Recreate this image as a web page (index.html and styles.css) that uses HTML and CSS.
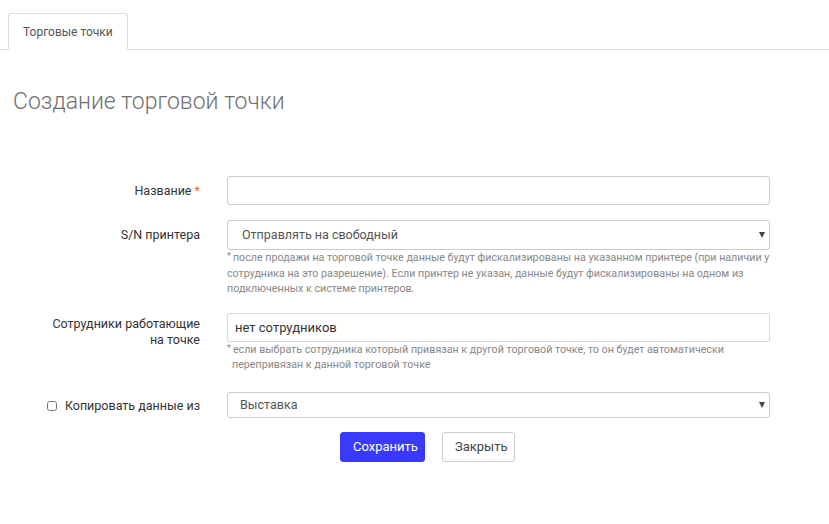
FILE: index.html
```html
<!DOCTYPE html>
<html lang="ru">
<head>
<meta charset="utf-8">
<title>Создание торговой точки</title>
<link rel="stylesheet" href="styles.css">
</head>
<body>
<nav class="tabs">
  <a class="tab active" href="#">Торговые точки</a>
</nav>

<h1 class="page-title">Создание торговой точки</h1>

<form class="form">
  <div class="row">
    <label class="label" for="name">Название <span class="req">*</span></label>
    <div class="field">
      <input class="control" id="name" type="text">
    </div>
  </div>

  <div class="row">
    <label class="label" for="printer">S/N принтера</label>
    <div class="field">
      <div class="select">
        <span>Отправлять на свободный</span>
        <i class="caret"></i>
      </div>
      <p class="help">после продажи на торговой точке данные будут фискализированы на указанном принтере (при наличии у сотрудника на это разрешение). Если принтер не указан, данные будут фискализированы на одном из подключенных к системе принтеров.</p>
    </div>
  </div>

  <div class="row row-wide">
    <label class="label label-multi" for="staff">Сотрудники работающие на точке</label>
    <div class="field">
      <div class="control tags">нет сотрудников</div>
      <p class="help help-indent">если выбрать сотрудника который привязан к другой торговой точке, то он будет автоматически перепривязан к данной торговой точке</p>
    </div>
  </div>

  <div class="row row-copy">
    <label class="label label-check"><input class="check" type="checkbox"> Копировать данные из</label>
    <div class="field">
      <div class="select select-copy">
        <span>Выставка</span>
        <i class="caret"></i>
      </div>
    </div>
  </div>

  <div class="actions">
    <button class="btn btn-primary" type="button">Сохранить</button>
    <button class="btn btn-default" type="button">Закрыть</button>
  </div>
</form>
</body>
</html>
```

FILE: styles.css
```css
* {
  box-sizing: border-box;
}

body {
  margin: 0;
  background: #fff;
  font-family: Roboto, "Noto Sans", Arial, sans-serif;
  color: #333;
  font-size: 13px;
}

/* tab strip */
.tabs {
  display: flex;
  padding: 13px 0 0 8px;
  border-bottom: 1px solid #ddd;
}

.tab {
  display: block;
  height: 37px;
  margin-bottom: -1px;
  padding: 0 14px;
  line-height: 36px;
  font-size: 12px;
  color: #555;
  text-decoration: none;
  background: #fff;
  border: 1px solid #ddd;
  border-bottom-color: #fff;
  border-radius: 3px 3px 0 0;
}

/* heading */
.page-title {
  margin: 38px 0 0 13px;
  font-size: 23px;
  font-weight: 300;
  line-height: 28px;
  color: #707070;
}

/* form grid */
.form {
  margin-top: 60px;
}

.row {
  display: grid;
  grid-template-columns: 200px 543px;
  column-gap: 27px;
  margin-bottom: 15px;
}

.row-wide {
  margin-top: 16px;
}

.row-copy {
  margin-top: 19px;
}

.label {
  text-align: right;
  font-size: 12.5px;
  line-height: 16px;
  padding-top: 7px;
  color: #333;
}

.label-multi {
  padding: 3px 0 0 40px;
  line-height: 16px;
}

.label-check {
  padding-top: 6px;
}

.req {
  color: #f0643c;
}

.check {
  width: 10px;
  height: 10px;
  margin: 0 5px 0 0;
  vertical-align: -1px;
}

.control {
  display: block;
  width: 100%;
  height: 29px;
  border: 1px solid #ccc;
  border-radius: 3px;
  background: #fff;
  font: inherit;
}

.tags {
  padding: 0 7px;
  line-height: 27px;
  border-color: #d5dbe2;
  border-radius: 2px;
  color: #333;
}

.select {
  position: relative;
  height: 30px;
  border: 1px solid #ccc;
  border-radius: 3px;
  padding: 0 14px;
  line-height: 28px;
  font-size: 12.5px;
  color: #555;
}

.select-copy {
  height: 26px;
  line-height: 24px;
  padding-left: 12px;
}

.caret {
  position: absolute;
  right: 4px;
  top: 50%;
  margin-top: -3px;
  width: 0;
  height: 0;
  border-left: 3px solid transparent;
  border-right: 3px solid transparent;
  border-top: 6px solid #444;
}

/* hint under a field, marked with a small raised asterisk */
.help {
  margin: -1px 0 0;
  font-size: 10.7px;
  line-height: 15.5px;
  color: #888;
}

.help::before {
  content: "*";
  margin-right: 2px;
  font-size: 9px;
  vertical-align: 2px;
}

.help-indent {
  padding-left: 5px;
  text-indent: -5px;
}

/* buttons */
.actions {
  display: flex;
  gap: 17px;
  margin-top: -1px;
  padding-left: 340px;
}

.btn {
  height: 30px;
  padding: 0 12px;
  font: inherit;
  font-size: 13px;
  border-radius: 3px;
  cursor: pointer;
}

.btn-primary {
  background: #3a3afc;
  border: 1px solid #3a3afc;
  color: #fff;
  width: 85px;
}

.btn-default {
  background: #fff;
  border: 1px solid #ccc;
  color: #444;
  width: 73px;
}
```
